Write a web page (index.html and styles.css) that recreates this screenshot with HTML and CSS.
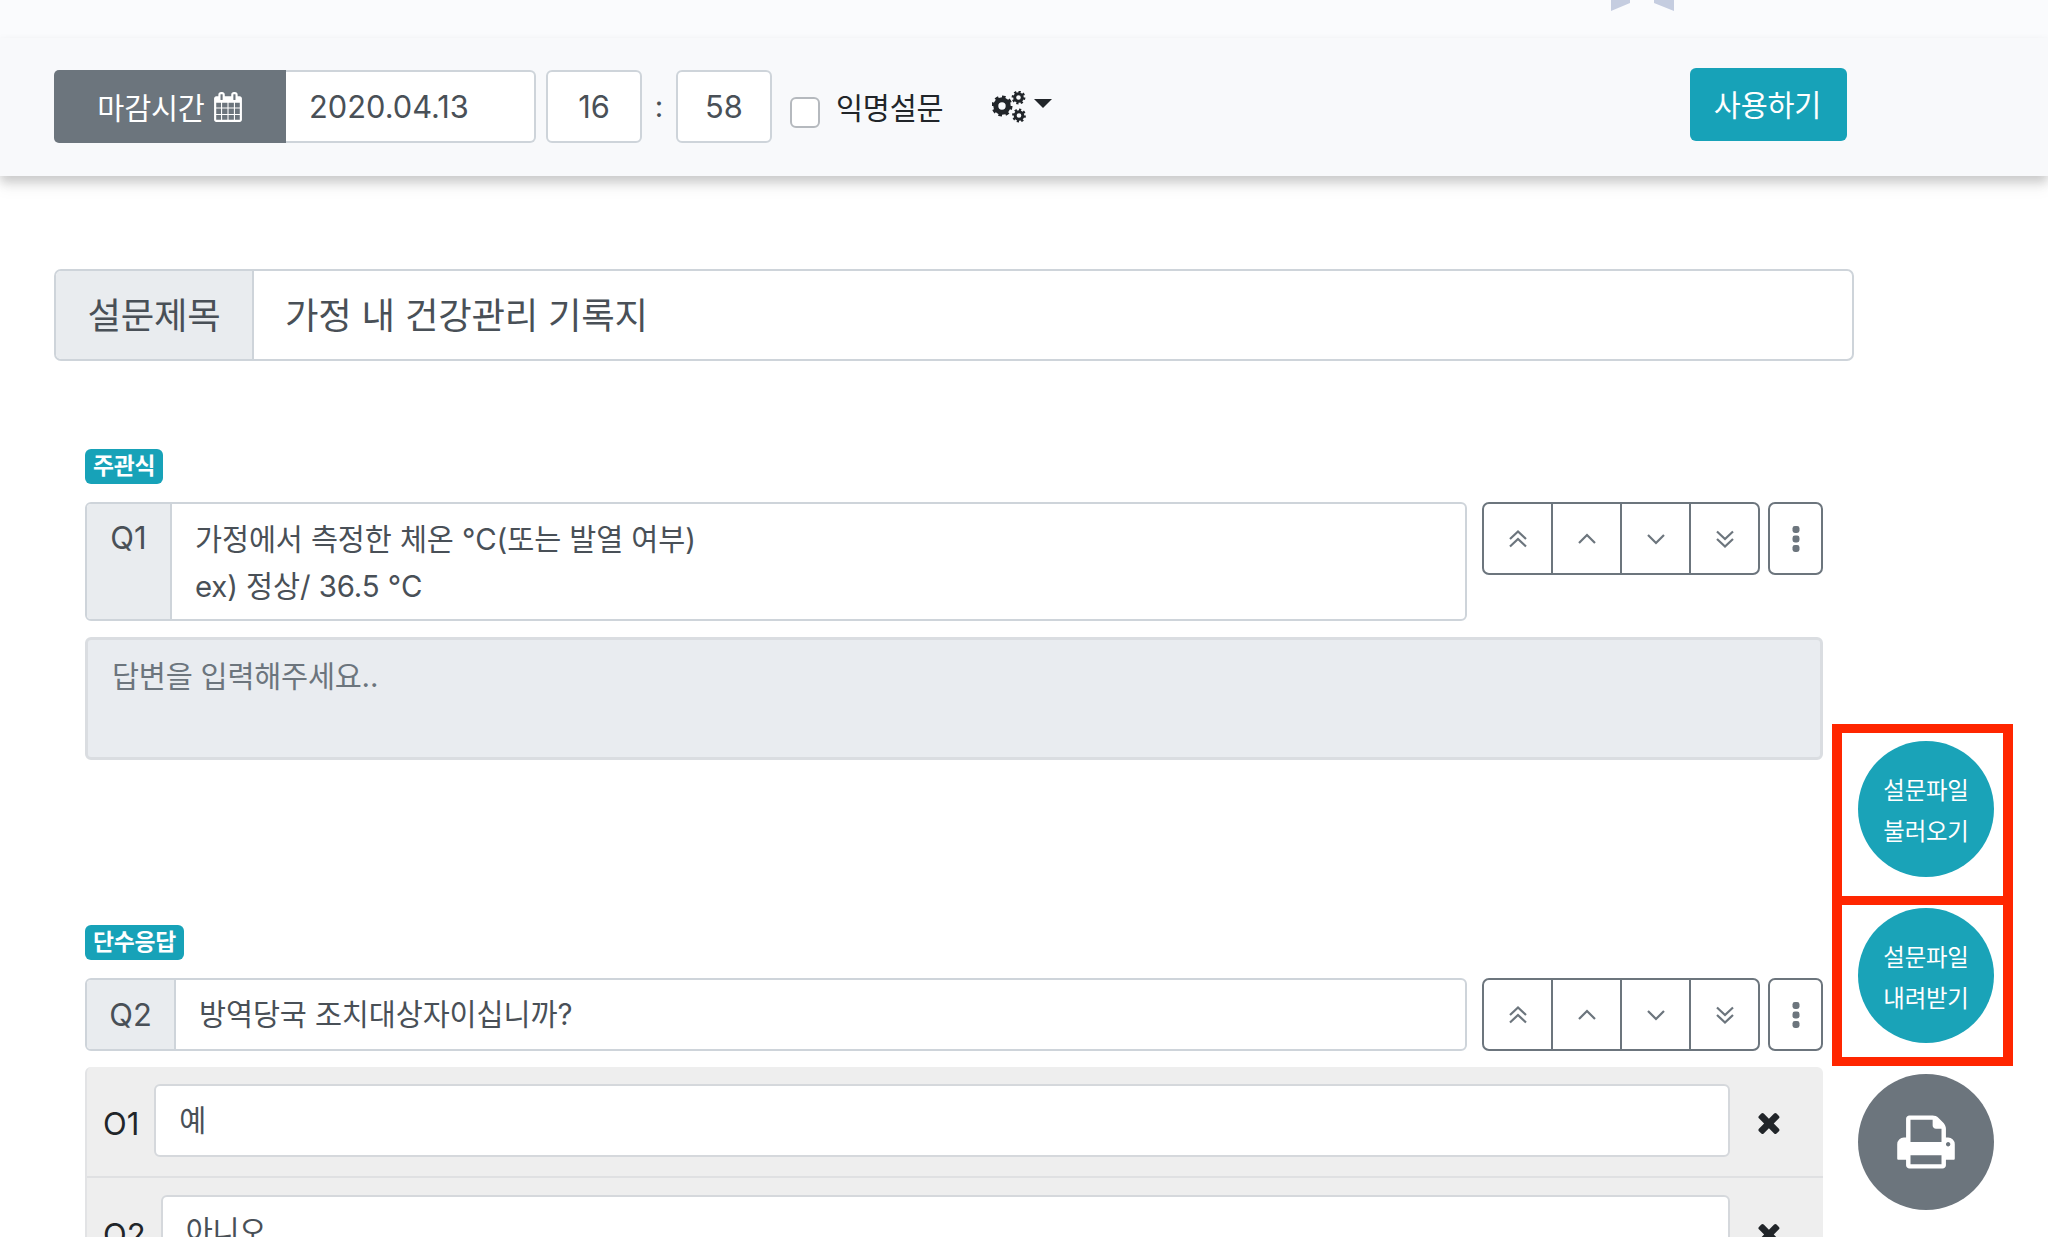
FILE: index.html
```html
<!DOCTYPE html>
<html lang="ko">
<head>
<meta charset="utf-8">
<title>설문</title>
<link rel="stylesheet" href="styles.css">
</head>
<body>
<svg class="sprite" width="0" height="0" aria-hidden="true">
  <defs>
    <symbol id="i-cal" viewBox="0 0 1792 1792"><path d="M192 1664h288v-288h-288v288zm352 0h320v-288h-320v288zm-352-352h288v-320h-288v320zm352 0h320v-320h-320v320zm-352-384h288v-288h-288v288zm736 736h320v-288h-320v288zm-384-736h320v-288h-320v288zm768 736h288v-288h-288v288zm-384-352h320v-320h-320v320zm-352-864v-288q0-13-9.5-22.5t-22.5-9.5h-64q-13 0-22.5 9.5t-9.5 22.5v288q0 13 9.5 22.5t22.5 9.5h64q13 0 22.5-9.5t9.5-22.5zm736 864h288v-320h-288v320zm-384-384h320v-288h-320v288zm384 0h288v-288h-288v288zm32-480v-288q0-13-9.5-22.5t-22.5-9.5h-64q-13 0-22.5 9.5t-9.5 22.5v288q0 13 9.5 22.5t22.5 9.5h64q13 0 22.5-9.5t9.5-22.5zm384-64v1280q0 52-38 90t-90 38h-1408q-52 0-90-38t-38-90v-1280q0-52 38-90t90-38h128v-96q0-66 47-113t113-47h64q66 0 113 47t47 113v96h384v-96q0-66 47-113t113-47h64q66 0 113 47t47 113v96h128q52 0 90 38t38 90z"/></symbol>
    <symbol id="i-times" viewBox="300 250 1200 1300"><path d="M1490 1322q0 40-28 68l-136 136q-28 28-68 28t-68-28l-294-294-294 294q-28 28-68 28t-68-28l-136-136q-28-28-28-68t28-68l294-294-294-294q-28-28-28-68t28-68l136-136q28-28 68-28t68 28l294 294 294-294q28-28 68-28t68 28l136 136q28 28 28 68t-28 68l-294 294 294 294q28 28 28 68z"/></symbol>
    <symbol id="i-print" viewBox="0 0 1792 1792"><path d="M448 1536h896v-256h-896v256zm0-640h896v-384h-160q-40 0-68-28t-28-68v-160h-640v640zm1152 64q0-26-19-45t-45-19-45 19-19 45 19 45 45 19 45-19 19-45zm128 0v416q0 13-9.5 22.5t-22.5 9.5h-224v160q0 40-28 68t-68 28h-960q-40 0-68-28t-28-68v-160h-224q-13 0-22.5-9.5t-9.5-22.5v-416q0-79 56.5-135.5t135.5-56.5h64v-544q0-40 28-68t68-28h672q40 0 88 20t76 48l152 152q28 28 48 76t20 88v256h64q79 0 135.5 56.5t56.5 135.5z"/></symbol>
    <symbol id="i-up2" viewBox="0 0 20 20"><path d="M2 10 10 2.5l8 7.5M2 17.500 10 10l8 7.500"/></symbol>
    <symbol id="i-up" viewBox="0 0 20 20"><path d="M2 14 10 6l8 8"/></symbol>
    <symbol id="i-down" viewBox="0 0 20 20"><path d="M2 6 10 14l8-8"/></symbol>
    <symbol id="i-down2" viewBox="0 0 20 20"><path d="M2 2.500 10 10l8-7.500M2 10 10 17.500 18 10"/></symbol>
    <symbol id="i-more" viewBox="0 0 8 26"><rect x="0.500" y="0" width="7" height="7" rx="2.400"/><rect x="0.500" y="9.500" width="7" height="7" rx="2.400"/><rect x="0.500" y="19" width="7" height="7" rx="2.400"/></symbol>
  </defs>
</svg>

<div class="ribbon-strip">
  <svg class="ribbon" viewBox="0 0 63 11"><path d="M0 0h19v3L0 11zM43 0h20v11L43 3z"/></svg>
</div>

<header class="toolbar">
  <div class="toolbar-left">
    <div class="date-group">
      <span class="date-label">마감시간 <svg class="cal"><use href="#i-cal"/></svg></span>
      <span class="field date-field">2020.04.13</span>
    </div>
    <span class="field time-field">16</span>
    <span class="colon">:</span>
    <span class="field time-field">58</span>
    <span class="check"></span>
    <span class="anon">익명설문</span>
    <span class="cog-menu">
      <svg class="cogs" viewBox="0 0 34 32">
        <circle class="gear-big" cx="10" cy="15" r="6.200"/>
        <circle class="gear-big-teeth" cx="10" cy="15" r="9" pathLength="16"/>
        <circle class="gear-small" cx="26.500" cy="6.500" r="3.800"/>
        <circle class="gear-small-teeth" cx="26.500" cy="6.500" r="5.700" pathLength="16"/>
        <circle class="gear-small" cx="27" cy="24.500" r="3.800"/>
        <circle class="gear-small-teeth" cx="27" cy="24.500" r="5.700" pathLength="16"/>
      </svg>
      <i class="caret"></i>
    </span>
  </div>
  <button class="use-btn">사용하기</button>
</header>

<main class="content">
  <div class="title-group">
    <span class="title-label">설문제목</span>
    <span class="title-value">가정 내 건강관리 기록지</span>
  </div>

  <section class="question q-first">
    <span class="badge">주관식</span>
    <div class="q-row">
      <div class="q-group">
        <span class="q-label">Q1</span>
        <div class="q-text">가정에서 측정한 체온 °C(또는 발열 여부)<br>ex) 정상/ 36.5 °C</div>
      </div>
      <div class="q-tools">
        <div class="btn-group">
          <span class="tool"><svg><use href="#i-up2"/></svg></span>
          <span class="tool"><svg><use href="#i-up"/></svg></span>
          <span class="tool"><svg><use href="#i-down"/></svg></span>
          <span class="tool"><svg><use href="#i-down2"/></svg></span>
        </div>
        <span class="more"><svg><use href="#i-more"/></svg></span>
      </div>
    </div>
    <div class="answer">답변을 입력해주세요..</div>
  </section>

  <section class="question q-second">
    <span class="badge">단수응답</span>
    <div class="q-row">
      <div class="q-group q-group-single">
        <span class="q-label q-label-wide">Q2</span>
        <div class="q-text q-text-single">방역당국 조치대상자이십니까?</div>
      </div>
      <div class="q-tools">
        <div class="btn-group">
          <span class="tool"><svg><use href="#i-up2"/></svg></span>
          <span class="tool"><svg><use href="#i-up"/></svg></span>
          <span class="tool"><svg><use href="#i-down"/></svg></span>
          <span class="tool"><svg><use href="#i-down2"/></svg></span>
        </div>
        <span class="more"><svg><use href="#i-more"/></svg></span>
      </div>
    </div>
    <div class="options">
      <div class="option">
        <span class="o-label">O1</span>
        <span class="o-input">예</span>
        <svg class="o-del"><use href="#i-times"/></svg>
      </div>
      <div class="option">
        <span class="o-label">O2</span>
        <span class="o-input">아니오</span>
        <svg class="o-del"><use href="#i-times"/></svg>
      </div>
    </div>
  </section>
</main>

<div class="float-buttons">
  <button class="fab fab-a">설문파일<br>불러오기</button>
  <button class="fab fab-b">설문파일<br>내려받기</button>
  <button class="fab fab-c"><svg><use href="#i-print"/></svg></button>
</div>
<div class="mark mark-a"></div>
<div class="mark mark-b"></div>
</body>
</html>
```
FILE: styles.css
```css
* { box-sizing: border-box; }
html, body { margin: 0; height: 1237px; overflow: hidden; }
body {
  position: relative;
  background: #fff;
  color: #495057;
  font-family: "Inter", "Noto Sans CJK KR", "Noto Sans", sans-serif;
  font-size: 29.4px;
  letter-spacing: -0.2px;
}
.sprite { position: absolute; }

.ribbon-strip { height: 38px; background: #fafbfd; position: relative; }
.ribbon { position: absolute; left: 1611px; top: 0; width: 63px; height: 11px; fill: #c5cde0; }

.toolbar {
  height: 138px;
  background: #f8f9fb;
  box-shadow: 0 6px 10px rgba(0,0,0,.18), 0 14px 14px rgba(0,0,0,.04);
  padding: 30px 201px 0 54px;
  display: flex;
  justify-content: space-between;
  align-items: flex-start;
  position: relative;
}
.toolbar-left { display: flex; align-items: center; height: 73px; margin-top: 2px; }
.date-group { display: flex; height: 73px; }
.date-label {
  width: 232px; background: #6c757d; color: #fff;
  border-radius: 5px 0 0 5px;
  display: flex; align-items: center; justify-content: center; gap: 8px;
  padding-bottom: 2px;
}
.cal { width: 30px; height: 30px; fill: #fff; margin-top: 2px; }
.field {
  display: flex; align-items: center; height: 73px; background: #fff;
  border: 2px solid #ced4da; border-radius: 6px;
  font-size: 30.8px; letter-spacing: 0;
}
.date-field { width: 250px; padding-left: 23px; border-left: 0; border-radius: 0 6px 6px 0; }
.time-field { width: 96px; justify-content: center; margin-left: 10px; }
.colon { width: 34px; text-align: center; }
.colon + .time-field { margin-left: 0; }
.check {
  width: 30px; height: 31px; background: #fff;
  border: 2px solid #b5b9be; border-radius: 6px;
  margin: 11px 0 0 18px;
}
.anon { margin: 0 0 2px 16px; color: #212529; }
.cog-menu { display: flex; align-items: center; margin: 0 0 0 49px; }
.cogs { width: 34px; height: 32px; }
.gear-big { fill: none; stroke: #212529; stroke-width: 5; }
.gear-big-teeth { fill: none; stroke: #212529; stroke-width: 3; stroke-dasharray: 1 1; }
.gear-small { fill: none; stroke: #212529; stroke-width: 3; }
.gear-small-teeth { fill: none; stroke: #212529; stroke-width: 2.4; stroke-dasharray: 1 1; }
.caret {
  width: 0; height: 0; margin: -6px 0 0 8px;
  border-left: 9px solid transparent; border-right: 9px solid transparent; border-top: 9px solid #212529;
}
.use-btn {
  width: 157px; height: 73px; border: 0; border-radius: 6px; padding: 0 2px 3px 0;
  background: #17a2b8; color: #fff; font: inherit; letter-spacing: inherit;
}

.content { width: 1800px; padding: 93px 0 0 54px; }
.title-group {
  display: flex; width: 1800px; height: 92px;
  border: 2px solid #ced4da; border-radius: 7px; font-size: 36.4px; overflow: hidden;
}
.title-label {
  width: 198px; background: #e9ecef; border-right: 2px solid #ced4da;
  display: flex; align-items: center; justify-content: center;
  padding-bottom: 4px;
}
.title-value { display: flex; align-items: center; padding: 0 0 4px 31px; }

.question { margin-left: 31px; width: 1738px; }
.q-first { margin-top: 88px; }
.q-second { margin-top: 165px; }
.badge {
  display: inline-block; height: 35px; line-height: 33px; padding: 0 8px;
  background: #17a2b8; color: #fff; border-radius: 6px;
  font-size: 22.8px; font-weight: 700;
  vertical-align: top;
}
.q-row { display: flex; justify-content: space-between; align-items: flex-start; margin-top: 18px; }
.q-group {
  display: flex; width: 1382px; min-height: 119px;
  border: 2px solid #ced4da; border-radius: 6px; overflow: hidden;
}
.q-group-single { min-height: 73px; height: 73px; }
.q-label {
  width: 85px; background: #e9ecef; border-right: 2px solid #ced4da;
  padding-top: 15px; text-align: center; flex: none; font-size: 31px; letter-spacing: 0;
}
.q-label-wide { width: 89px; padding-top: 0; display: flex; align-items: center; justify-content: center; }
.q-text { padding: 12px 0 0 23px; line-height: 47px; letter-spacing: -0.1px; }
.q-text-single { padding: 11px 0 0 23px; }
.q-tools { display: flex; gap: 8px; }
.btn-group {
  display: flex; width: 278px; height: 73px;
  border: 2px solid #6c757d; border-radius: 7px;
}
.tool {
  flex: 1; display: flex; align-items: center; justify-content: center;
  border-left: 2px solid #6c757d;
}
.tool:first-child { border-left: 0; }
.tool svg { width: 20px; height: 20px; fill: none; stroke: #6c757d; stroke-width: 2.2; }
.more {
  width: 55px; height: 73px; border: 2px solid #6c757d; border-radius: 7px;
  display: flex; align-items: center; justify-content: center;
}
.more svg { width: 8px; height: 26px; fill: #6c757d; }
.answer {
  margin-top: 16px; height: 123px; background: #e9ecf0;
  border: 3px solid #dadde1; border-radius: 6px;
  padding: 13px 24px; color: #6c757d; line-height: 47px;
}
.options {
  margin-top: 16px; background: #eeeeee; border-radius: 6px 6px 0 0;
  border-left: 2px solid #e2e3e5;
}
.option {
  display: flex; align-items: flex-start; height: 111px; padding: 17px 0 0 16px;
  border-bottom: 2px solid #dfe0e2; color: #212529;
}
.o-label { height: 73px; display: flex; align-items: center; margin-top: 3px; font-size: 31px; letter-spacing: 0; }
.o-input {
  flex: 1; height: 73px; margin: 0 28px 0 15px; background: #fff;
  border: 2px solid #d5d8dc; border-radius: 6px; padding: 11px 23px; color: #495057;
  line-height: 47px;
}
.o-del { width: 22px; height: 23px; margin: 27px 43px 0 0; fill: #212529; flex: none; }

.float-buttons {
  position: absolute; left: 1858px; top: 741px;
  display: flex; flex-direction: column; gap: 31px;
}
.fab {
  width: 136px; height: 136px; border: 0; border-radius: 50%;
  color: #fff; font: inherit; font-size: 23.4px; line-height: 41px; letter-spacing: -0.2px;
  padding: 4px 0 0; display: flex; align-items: center; justify-content: center; text-align: center;
}
.fab-a, .fab-b { background: #1aa3b8; }
.fab-c { background: #6c757d; padding: 0; }
.fab-b { height: 135px; }
.fab-c svg { width: 62px; height: 62px; fill: #fff; }

.mark { position: absolute; border: 9px solid #ff2600; border-left-width: 10px; border-right-width: 10px; }
.mark-a { left: 1832px; top: 724px; width: 181px; height: 181px; }
.mark-b { left: 1832px; top: 896px; width: 181px; height: 170px; }
```
